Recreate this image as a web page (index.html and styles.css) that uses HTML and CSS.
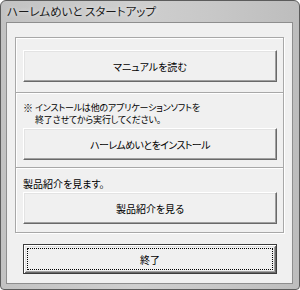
FILE: index.html
```html
<!DOCTYPE html>
<html lang="ja">
<head>
    <meta charset="UTF-8">
    <title>ハーレムめいと スタートアップ</title>
    <link rel="stylesheet" href="styles.css">
</head>
<body>
    <div class="window">
        <div class="titlebar">ハーレムめいと スタートアップ</div>
        <div class="client">
            <div class="group">
                <div class="section section-manual">
                    <button class="btn">マニュアルを読む</button>
                </div>
                <div class="section section-install">
                    <div class="note">
                        <span class="note-mark">※</span>
                        <span>インストールは他のアプリケーションソフトを<br>終了させてから実行してください。</span>
                    </div>
                    <button class="btn btn-narrow">ハーレムめいとをインストール</button>
                </div>
                <div class="section section-product">
                    <div class="label">製品紹介を見ます。</div>
                    <button class="btn">製品紹介を見る</button>
                </div>
            </div>
            <button class="btn btn-default">終了</button>
        </div>
    </div>
</body>
</html>
```

FILE: styles.css
```css
body {
    margin: 0;
    padding: 0;
    background-color: #fff;
    font-family: "Noto Sans CJK JP", sans-serif;
    font-size: 10px;
    font-feature-settings: "palt";
    color: #000;
}

.window {
    width: 300px;
    height: 290px;
    box-sizing: border-box;
    border: 1px solid #5c5c5c;
    border-radius: 6px 6px 4px 4px;
    background: linear-gradient(to right, #c2c2c2, #cfcfcf 45%, #c8c8c8 70%, #bdbdbd);
    padding: 0 6px 5px 5px;
    display: flex;
    flex-direction: column;
}

.titlebar {
    height: 21px;
    line-height: 21px;
    padding-left: 1px;
    font-size: 11.5px;
    color: #1a1a1a;
    text-shadow: 0 0 4px rgba(255, 255, 255, 0.8);
}

.client {
    flex: 1;
    border: 1px solid #8e8e8e;
    background-color: #f0f0f0;
    display: flex;
    flex-direction: column;
    padding: 0 8px;
}

.group {
    margin-top: 14px;
    display: flex;
    flex-direction: column;
}

.section {
    border: 1px solid #a8a8a8;
    box-shadow: inset 1px 1px 0 #fff, 1px 1px 0 #fff;
    padding: 0 6px 0 7px;
    display: flex;
    flex-direction: column;
}

.section + .section {
    margin-top: -1px;
}

.section-manual {
    padding-top: 12px;
    padding-bottom: 10px;
}

.section-install {
    padding-top: 8px;
    padding-bottom: 7px;
}

.section-product {
    padding-top: 10px;
    padding-bottom: 8px;
}

.note {
    display: flex;
    font-size: 9px;
    letter-spacing: -0.2px;
    line-height: 12px;
    margin-bottom: 2px;
    padding-top: 1px;
}

.note-mark {
    width: 12px;
    flex: none;
    font-size: 10px;
}

.label {
    line-height: 12px;
    margin-bottom: 2px;
}

.btn {
    height: 32px;
    width: 100%;
    box-sizing: border-box;
    font-family: inherit;
    font-size: 10px;
    font-feature-settings: "palt";
    color: #000;
    background-color: #f0f0f0;
    border: 1px solid;
    border-color: #fff #696969 #696969 #fff;
    box-shadow: inset -1px -1px 0 #a0a0a0, inset 1px 1px 0 #e3e3e3;
    padding: 0;
}

.btn-narrow {
    letter-spacing: -0.6px;
}

.btn-default {
    position: relative;
    margin: 11px 0 0 8px;
    width: 254px;
    height: 30px;
    border: 1px solid #3c3c3c;
    box-shadow: inset 1px 1px 0 #fff, inset -1px -1px 0 #696969, inset 2px 2px 0 #e3e3e3, inset -2px -2px 0 #a0a0a0;
}

.btn-default::after {
    content: "";
    position: absolute;
    top: 3px;
    left: 3px;
    right: 3px;
    bottom: 3px;
    border: 1px dotted #000;
}
```
